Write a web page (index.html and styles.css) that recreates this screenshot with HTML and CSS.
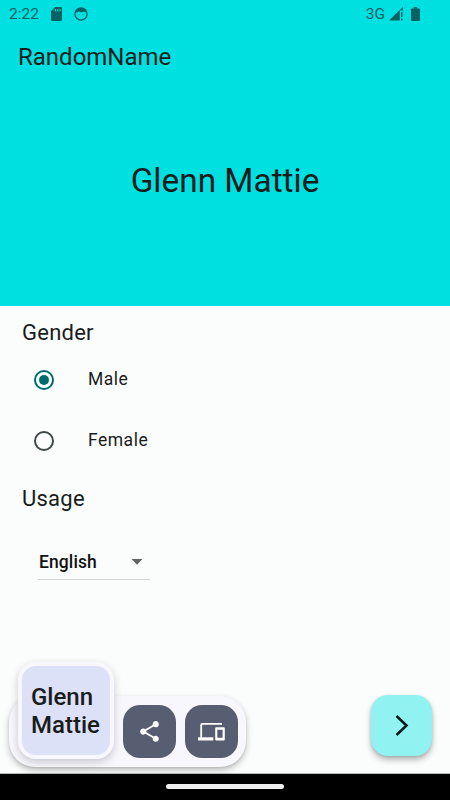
FILE: index.html
```html
<!DOCTYPE html>
<html lang="en">
<head>
<meta charset="utf-8">
<title>RandomName</title>
<link rel="stylesheet" href="styles.css">
</head>
<body>
<div class="screen">
  <header class="hero">
    <div class="status">
      <span class="clock">2:22</span>
      <svg class="sd" width="11" height="14" viewBox="0 0 11 14"><path fill="currentColor" fill-rule="evenodd" d="M4 0h6q1 0 1 1v12q0 1-1 1H1q-1 0-1-1V4zM4 2v2.500h1V2zM6.300 2v2.500h1V2zM8.600 2v2.500h1V2z"/></svg>
      <svg class="face" width="14" height="14" viewBox="0 0 14 14"><circle cx="7" cy="7" r="6.100" fill="none" stroke="currentColor" stroke-width="1.300"/><path fill="currentColor" d="M1 4.500Q3 .8 7 .8T13 4.500L12 5.500 9 4.500 7.500 5.500 5 4.500 2 5.500z"/><path fill="currentColor" opacity=".3" d="M4 7h2v1H4zM8 7h2v1H8z"/></svg>
      <span class="network">3G</span>
      <svg class="signal" width="15" height="14" viewBox="0 0 15 14"><path fill="currentColor" d="M0 13.500L10.800 3v10.500zM11 2.800L14 0v3.500h-3zM12 5h1.500v5H12zM12 11.500h1.500v2H12z"/></svg>
      <svg class="battery" width="9" height="14" viewBox="0 0 9 14"><path fill="currentColor" d="M2.700 0h3.600v1.500H8q1 0 1 1V13q0 1-1 1H1q-1 0-1-1V2.500q0-1 1-1h1.700z"/></svg>
    </div>
    <h1 class="title">RandomName</h1>
    <div class="name"><span>Glenn Mattie</span></div>
  </header>
  <main class="settings">
    <h2 class="heading">Gender</h2>
    <div class="option"><span class="radio checked"></span><span class="label">Male</span></div>
    <div class="option"><span class="radio"></span><span class="label">Female</span></div>
    <h2 class="heading usage">Usage</h2>
    <div class="select"><span>English</span><svg width="12" height="6" viewBox="0 0 12 6"><path fill="#616363" d="M.5 0h11L6 5.700z"/></svg></div>
  </main>
  <div class="actions">
    <div class="clipboard">
      <div class="preview"><span>Glenn<br>Mattie</span></div>
      <div class="tile"><svg width="25" height="25" viewBox="0 0 24 24"><path fill="#fff" d="M18 16.080c-.76 0-1.440.3-1.960.77L8.910 12.700c.05-.23.09-.46.09-.7s-.04-.47-.09-.7l7.050-4.110c.54.5 1.250.81 2.040.81 1.660 0 3-1.340 3-3s-1.340-3-3-3-3 1.340-3 3c0 .24.04.47.09.7L8.040 9.810C7.500 9.310 6.790 9 6 9c-1.660 0-3 1.340-3 3s1.340 3 3 3c.79 0 1.500-.31 2.040-.81l7.120 4.160c-.05.21-.08.43-.08.65 0 1.610 1.310 2.920 2.920 2.920s2.920-1.310 2.920-2.920-1.310-2.920-2.920-2.920z"/></svg></div>
      <div class="tile"><svg width="27" height="18" viewBox="0 0 27 18"><path fill="none" stroke="#fff" stroke-width="1.800" d="M3.200 15V2q0-1.100 1.100-1.100H24"/><path fill="#fff" d="M0 14.300h15.300v3.200H0z"/><path fill="#fff" fill-rule="evenodd" d="M18.200 4.200h7.600q1 0 1 1v11.300q0 1-1 1h-7.600q-1 0-1-1V5.200q0-1 1-1zM19.300 6.800v8h5.300v-8z"/></svg></div>
    </div>
    <div class="fab"><svg width="14" height="22" viewBox="0 0 14 22"><path fill="none" stroke="#051819" stroke-width="2.500" d="M1.500 1L11.500 10.500 1.500 20"/></svg></div>
  </div>
  <footer class="nav"><span class="handle"></span></footer>
</div>
</body>
</html>
```

FILE: styles.css
```css
* { box-sizing: border-box; }
body { margin: 0; font-family: Roboto, "Liberation Sans", sans-serif; color: #191c1c; }
svg { display: block; flex: none; }
.screen { width: 450px; height: 800px; display: flex; flex-direction: column; background: #fbfdfc; overflow: hidden; }
.hero { height: 306px; background: #00e0e0; display: flex; flex-direction: column; }
.status { height: 27px; padding: 0 30px 0 9px; display: flex; align-items: center; color: #086264; font-size: 15.500px; }
.sd { margin-left: 12px; }
.face { margin-left: 12px; }
.network { margin-left: auto; font-size: 15.500px; }
.signal { margin-left: 4px; }
.battery { margin-left: 7px; }
.title { margin: 15px 0 0 18px; font-size: 24px; line-height: 30px; font-weight: 400; }
.name { margin-top: 89px; text-align: center; font-size: 33.400px; line-height: 40px; }
.settings { height: 355px; padding: 13px 22px 0; }
.heading { margin: 0; font-size: 22px; line-height: 28px; font-weight: 400; letter-spacing: .25px; }
.option { height: 61px; padding-left: 12px; display: flex; align-items: center; gap: 34px; font-size: 17.500px; letter-spacing: .5px; }
.label { margin-top: -2px; }
.heading + .option { margin-top: 2px; }
.radio { width: 20px; height: 20px; border: 2px solid #3f4949; border-radius: 50%; display: grid; place-items: center; }
.checked { border-color: #00696b; }
.checked::after { content: ""; width: 10px; height: 10px; border-radius: 50%; background: #00696b; }
.usage { margin-top: 14px; }
.select { width: 112px; height: 36px; margin: 31px 0 0 16px; padding: 0 7px 0 1px; display: flex; align-items: center; justify-content: space-between; border-bottom: 1px solid #d0d2d1; font-size: 17.500px; font-weight: 500; letter-spacing: .1px; color: #111; }
.actions { height: 113px; padding: 0 18px 0 9px; display: flex; justify-content: space-between; align-items: flex-start; border-bottom: 1px solid #b8baba; }
.clipboard { width: 237px; height: 71px; margin-top: 35px; padding: 9px 8px 0 9px; display: flex; gap: 9px; background: #f8f7fe; border-radius: 26px; box-shadow: 0 3px 6px #0004, 0 1px 2px #0001; }
.preview { width: 96px; height: 97px; margin-top: -43px; border: 4px solid #f8f7fe; border-radius: 18px; background: #dde1f8; box-shadow: 0 3px 8px #0003; display: flex; align-items: center; padding-left: 9px; font-size: 24px; line-height: 28px; font-weight: 500; }
.tile { width: 53px; height: 53px; border-radius: 17px; background: #585e71; display: grid; place-items: center; }
.fab { width: 61px; height: 61px; margin-top: 34px; border-radius: 17px; background: #90f3f2; display: grid; place-items: center; box-shadow: 0 4px 6px #0004, 0 1px 3px #0002; }
.nav { height: 26px; background: #000; display: flex; justify-content: center; padding-top: 10px; }
.handle { width: 118px; height: 5px; border-radius: 3px; background: #eee; }
```
